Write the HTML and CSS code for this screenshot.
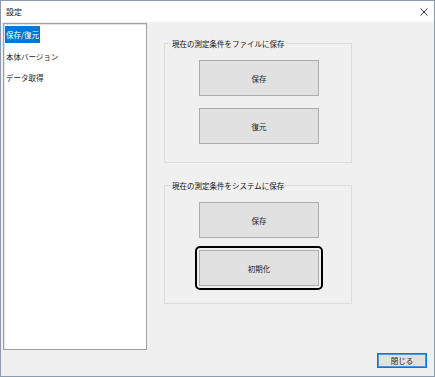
FILE: index.html
```html
<!DOCTYPE html>
<html lang="ja">
<head>
    <meta charset="UTF-8">
    <title>設定</title>
    <link rel="stylesheet" href="styles.css">
</head>
<body>

<div class="window">
    <div class="titlebar">
        <span class="title">設定</span>
        <svg class="close-x" width="8" height="8" viewBox="0 0 8 8">
            <path d="M0.5 0.5 L7.5 7.5 M7.5 0.5 L0.5 7.5" stroke="#333" stroke-width="1" fill="none"/>
        </svg>
    </div>
    <div class="main">
        <ul class="menu">
            <li class="selected"><span>保存/復元</span></li>
            <li><span>本体バージョン</span></li>
            <li><span>データ取得</span></li>
        </ul>
        <div class="pane">
            <fieldset class="group">
                <legend>現在の測定条件をファイルに保存</legend>
                <button class="btn">保存</button>
                <button class="btn">復元</button>
            </fieldset>
            <fieldset class="group">
                <legend>現在の測定条件をシステムに保存</legend>
                <button class="btn">保存</button>
                <button class="btn focused">初期化</button>
            </fieldset>
        </div>
    </div>
    <div class="footer">
        <button class="close-btn">閉じる</button>
    </div>
</div>

</body>
</html>
```

FILE: styles.css
```css
body {
    margin: 0;
    background-color: #f0f0f0;
    font-family: "Noto Sans CJK JP", "Noto Sans", sans-serif;
    color: #222;
}
.window {
    width: 435px;
    height: 377px;
    box-sizing: border-box;
    border: 1px solid #8d9bae;
    background: #f0f0f0;
    display: flex;
    flex-direction: column;
}
.titlebar {
    height: 21px;
    background: white;
    display: flex;
    align-items: center;
    justify-content: space-between;
    padding: 0 6px 0 5px;
}
.title {
    font-size: 8px;
    color: #111;
}
.main {
    display: flex;
    height: 327px;
    padding-top: 1px;
}
.menu {
    list-style: none;
    margin: 0 0 0 2px;
    padding: 2px 0 0 1px;
    width: 144px;
    height: 327px;
    box-sizing: border-box;
    background: white;
    border: 1px solid #a0a0a0;
    box-shadow: inset 1px 1px 0 #e3e3e3;
    font-size: 7.5px;
}
.menu li {
    height: 17px;
    line-height: 17px;
    margin-bottom: 4.5px;
}
.menu li span {
    display: inline-block;
    padding: 0 1px;
}
.menu li.selected span {
    background: #0078d7;
    color: white;
}
.pane {
    margin-left: 17px;
    padding-top: 20px;
    display: flex;
    flex-direction: column;
    gap: 22px;
}
.group {
    position: relative;
    margin: 0;
    width: 188px;
    height: 120px;
    box-sizing: border-box;
    border: 1px solid #dcdcdc;
    padding: 16px 0 0 34px;
    display: flex;
    flex-direction: column;
    gap: 12px;
}
.group + .group {
    height: 119px;
}
.group legend {
    position: absolute;
    top: -6px;
    left: 6px;
    padding: 0 1px;
    background: #f0f0f0;
    font-size: 7.5px;
    line-height: 11px;
    color: #111;
}
.btn {
    position: relative;
    width: 120px;
    height: 36px;
    margin: 0;
    background: #e1e1e1;
    border: 1px solid #adadad;
    font-family: inherit;
    font-size: 7.5px;
    color: #222;
    padding: 0;
}
.focused::after {
    content: "";
    position: absolute;
    left: -5px;
    top: -5px;
    right: -5px;
    bottom: -5px;
    border: 2px solid #000;
    border-radius: 5px;
}
.footer {
    display: flex;
    justify-content: flex-end;
    padding: 3px 7px 0 0;
}
.close-btn {
    width: 50px;
    height: 15px;
    margin: 0;
    padding: 0;
    background: #e1e1e1;
    border: 1px solid #0078d7;
    box-shadow: inset 0 0 0 1px #4a9ae2;
    font-family: inherit;
    font-size: 7.5px;
    color: #222;
}
```
